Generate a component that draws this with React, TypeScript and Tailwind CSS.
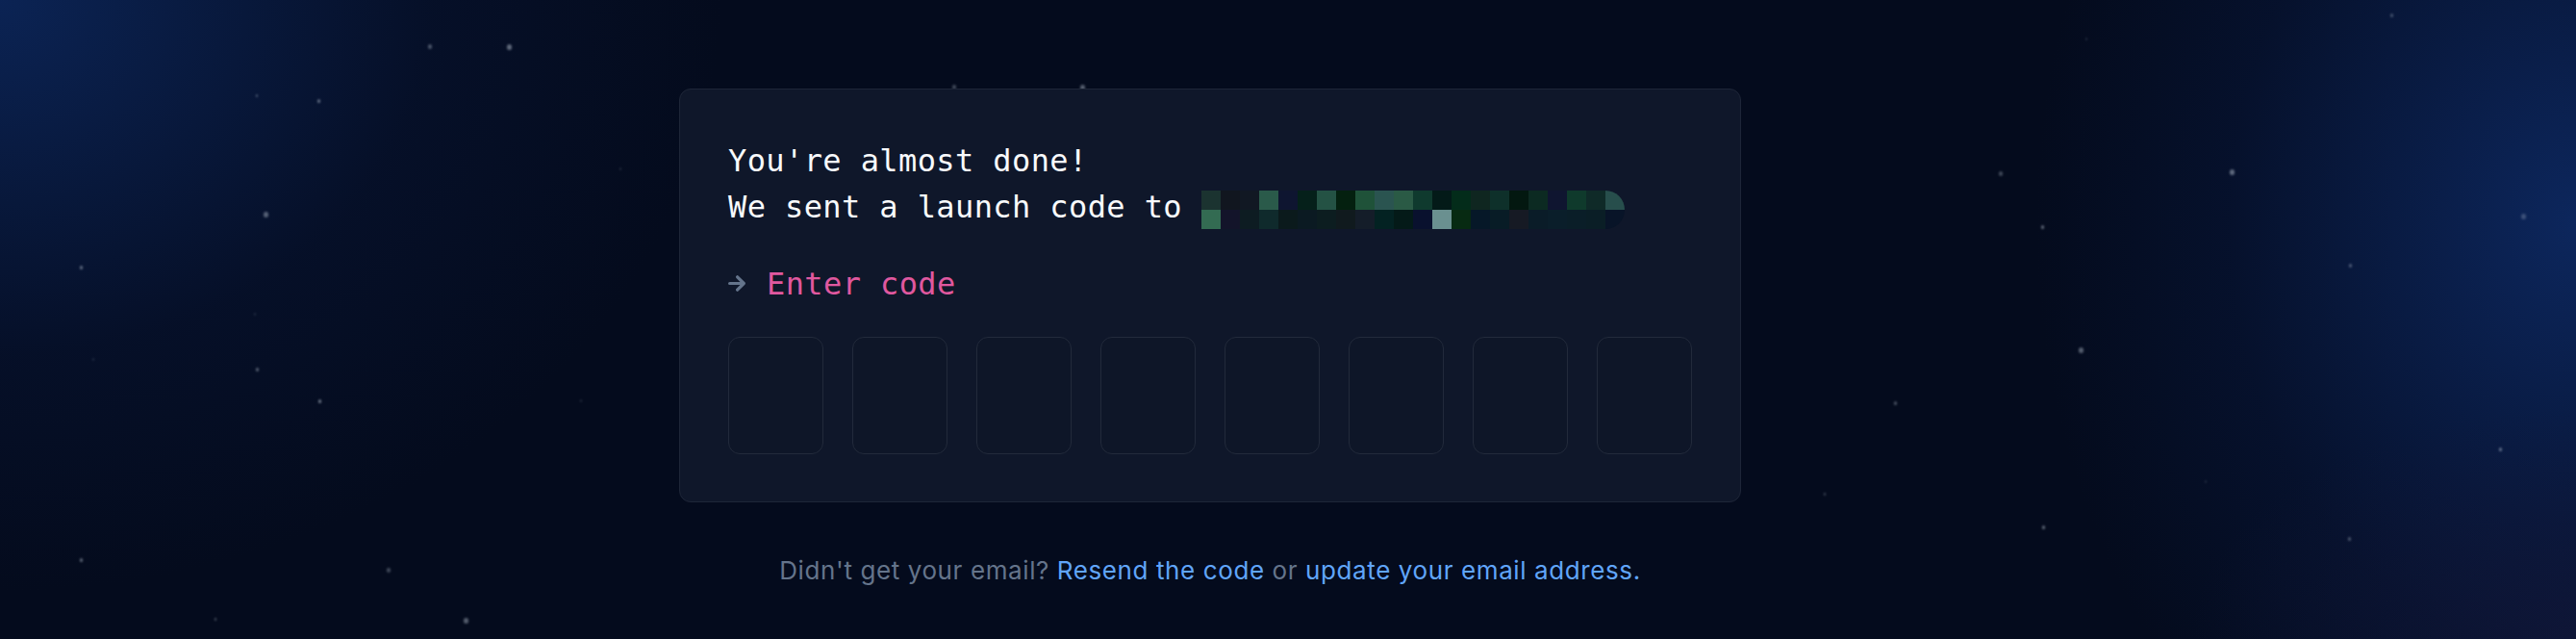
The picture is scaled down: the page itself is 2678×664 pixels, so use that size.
const emailTop = [
  'bg-[#1b3330]', 'bg-[#11161f]', 'bg-[#111823]', 'bg-[#2a5a4a]', 'bg-[#0e1530]', 'bg-[#05201a]',
  'bg-[#245244]', 'bg-[#04200f]', 'bg-[#1f5239]', 'bg-[#2a5450]', 'bg-[#2a5a45]', 'bg-[#0f3a2e]',
  'bg-[#031a18]', 'bg-[#032c1a]', 'bg-[#0f2620]', 'bg-[#0e302a]', 'bg-[#031810]', 'bg-[#0c2a22]',
  'bg-[#0f1530]', 'bg-[#0f3a2c]', 'bg-[#0f2a28]', 'bg-[#274e4c]',
]

const emailBottom = [
  'bg-[#336b52]', 'bg-[#13142a]', 'bg-[#0d1c22]', 'bg-[#0f2a2c]', 'bg-[#0b1a1c]', 'bg-[#0b1a22]',
  'bg-[#0c1d20]', 'bg-[#101a1e]', 'bg-[#141d29]', 'bg-[#032222]', 'bg-[#041a18]', 'bg-[#09112e]',
  'bg-[#6a9090]', 'bg-[#072a12]', 'bg-[#061828]', 'bg-[#081c26]', 'bg-[#161a24]', 'bg-[#0a1c28]',
  'bg-[#0a1e2a]', 'bg-[#0a1e28]', 'bg-[#0a1e26]', 'bg-[#081428]',
]

// x, y, size, opacity
const stars: [number, number, number, number][] = [
  [445, 46, 5, 0.35], [527, 46, 6, 0.45], [266, 98, 3, 0.35], [330, 103, 4, 0.45],
  [274, 220, 6, 0.4], [83, 276, 4, 0.45], [264, 325, 3, 0.15], [266, 382, 4, 0.4],
  [331, 415, 4, 0.5], [83, 580, 4, 0.45], [402, 590, 5, 0.3], [223, 642, 3, 0.35],
  [482, 642, 6, 0.4], [644, 174, 3, 0.15], [603, 415, 3, 0.15], [96, 372, 3, 0.15],
  [990, 88, 5, 0.3], [1123, 88, 6, 0.4],
  [2485, 14, 4, 0.3], [2168, 39, 3, 0.15], [2078, 178, 5, 0.3], [2318, 176, 6, 0.45],
  [2122, 234, 4, 0.45], [2621, 222, 6, 0.25], [2442, 274, 4, 0.35], [2161, 361, 6, 0.4],
  [2598, 465, 4, 0.45], [2123, 546, 4, 0.45], [2441, 558, 4, 0.35], [2292, 499, 3, 0.15],
  [1969, 417, 4, 0.35], [1896, 512, 3, 0.3],
]

function EmailBlur() {
  return (
    <span className="mt-[7px] self-start flex flex-col overflow-hidden rounded-r-[20px]">
      <span className="flex">
        {emailTop.map((c, i) => (
          <span key={i} className={`h-[20px] w-[20px] ${c}`} />
        ))}
      </span>
      <span className="flex">
        {emailBottom.map((c, i) => (
          <span key={i} className={`h-[20px] w-[20px] ${c}`} />
        ))}
      </span>
    </span>
  )
}

export default function App() {
  return (
    <div className="relative h-[664px] w-full overflow-hidden bg-[#040b1d]">
      {/* glows */}
      <div className="absolute inset-0 bg-[radial-gradient(ellipse_1000px_820px_at_0%_0%,rgba(12,38,90,0.9),rgba(8,22,56,0.4)_45%,transparent_75%)]" />
      <div className="absolute inset-0 bg-[radial-gradient(ellipse_720px_900px_at_100%_35%,rgba(13,40,96,0.95),rgba(8,24,62,0.45)_50%,transparent_78%)]" />
      <div className="absolute inset-0 bg-[radial-gradient(ellipse_500px_300px_at_100%_100%,rgba(20,24,60,0.6),transparent_80%)]" />

      {stars.map(([x, y, s, o], i) => (
        <span
          key={i}
          className="absolute rounded-full bg-slate-300 blur-[1px]"
          style={{ left: x, top: y, width: s * 0.8, height: s, opacity: o }}
        />
      ))}

      <div className="relative ml-[706px] w-[1104px] pt-[92px]">
        <div className="rounded-xl border border-[#1e2638] bg-[#0f172a] px-[50px] pb-[49px] pt-[50px] font-['DejaVu_Sans_Mono',monospace] text-[32px] leading-[48px] tracking-[0.4px] text-[#f8fafc]">
          <p>You're almost done!</p>
          <p className="flex whitespace-pre">
            <span>We sent a launch code to </span>
            <EmailBlur />
          </p>

          <div className="mt-8 flex h-[48px] items-center">
            <svg width="18" height="17" viewBox="0 0 18 17" fill="none" className="mt-[-1px]">
              <path
                d="M1.6 8.5h14.6M9.6 1.8l6.7 6.7-6.7 6.7"
                stroke="#64748b"
                strokeWidth="3.2"
                strokeLinecap="round"
                strokeLinejoin="round"
              />
            </svg>
            <span className="ml-[22px] text-[#e0589f]">Enter code</span>
          </div>

          <div className="mt-[31px] grid grid-cols-8 gap-[30px]">
            {Array.from({ length: 8 }).map((_, i) => (
              <div key={i} className="h-[122px] rounded-xl border border-[#222a3b] bg-[#0e1628]" />
            ))}
          </div>
        </div>

        <p className="mt-[53px] text-center font-['Inter',sans-serif] text-[26px] leading-[36px] tracking-[0.6px] text-[#64748b]">
          Didn't get your email? <span className="text-[#60a5fa]">Resend the code</span> or{' '}
          <span className="text-[#60a5fa]">update your email address.</span>
        </p>
      </div>
    </div>
  )
}
